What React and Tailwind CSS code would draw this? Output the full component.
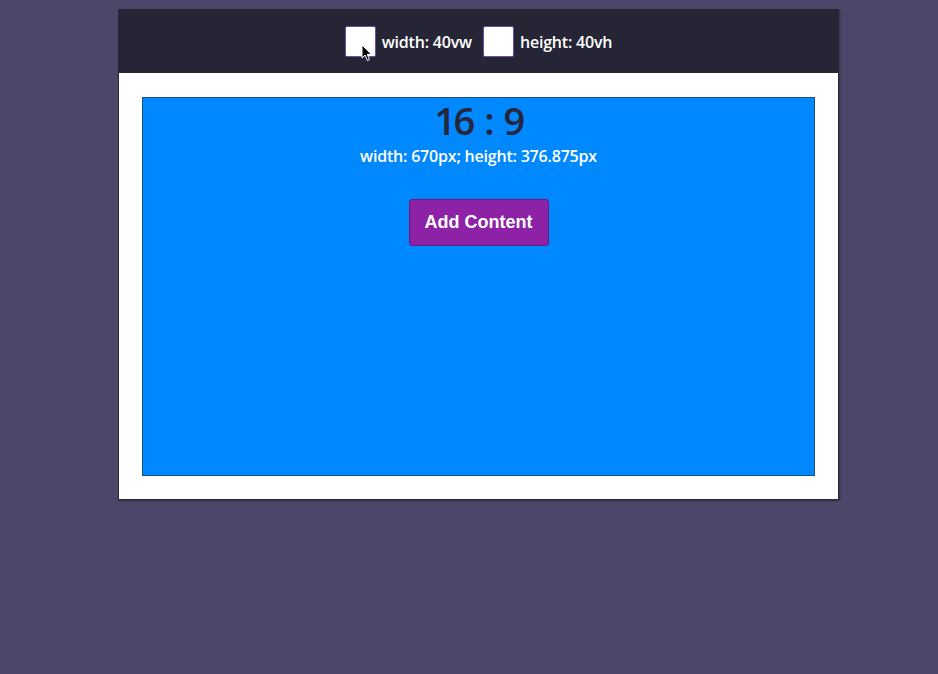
import React from "react";

const Cursor = () => (
  <svg
    className="absolute left-[15px] top-[17px]"
    width="12"
    height="18"
    viewBox="0 0 12 18"
  >
    <path
      d="M1 1 L1 14 L4 11 L6.5 16.5 L8.5 15.6 L6.2 10.3 L10.5 10.3 Z"
      fill="#000"
      stroke="#fff"
      strokeWidth="1"
      strokeLinejoin="round"
    />
  </svg>
);

const Toggle = ({ label, withCursor }) => (
  <label className="flex items-center gap-[6px]">
    <span className="relative block w-[31px] h-[31px] rounded-[2px] bg-white border border-[#6d4fa0]">
      {withCursor && <Cursor />}
    </span>
    <span className="text-white text-[16px] font-semibold tracking-[-0.2px]">
      {label}
    </span>
  </label>
);

export default function App() {
  return (
    <div
      className="min-h-[674px] bg-[#4a4768] pt-[9px]"
      style={{ fontFamily: '"Open Sans", "Noto Sans", sans-serif' }}
    >
      <div className="ml-[118px] w-[721px] border border-[#2a2838] shadow-[1px_1px_2px_rgba(0,0,0,0.35)]">
        {/* top bar with the two size toggles */}
        <div className="h-[63px] bg-[#262535] flex items-center justify-center gap-[11px]">
          <Toggle label="width: 40vw" withCursor />
          <Toggle label="height: 40vh" />
        </div>

        <div className="bg-white pt-6 px-[23px] pb-[23px]">
          <div className="h-[379px] bg-[#0088ff] border border-[#1c4f7e] flex flex-col items-center">
            <h1 className="-mt-[1px] text-[38px] leading-[46px] font-semibold text-[#26253a] tracking-[-2.5px] [word-spacing:4px]">
              16 : 9
            </h1>
            <p className="mt-[3px] text-white text-[16px] leading-[20px] font-semibold tracking-[-0.2px]">
              width: 670px; height: 376.875px
            </p>
            <button
              className="mt-[33px] w-[140px] h-[47px] rounded-[3px] bg-[#8e22a6] border border-[#6a1a7e] text-white text-[18px] font-bold"
              style={{ fontFamily: '"Liberation Sans", Arial, sans-serif' }}
            >
              Add Content
            </button>
          </div>
        </div>
      </div>
    </div>
  );
}
